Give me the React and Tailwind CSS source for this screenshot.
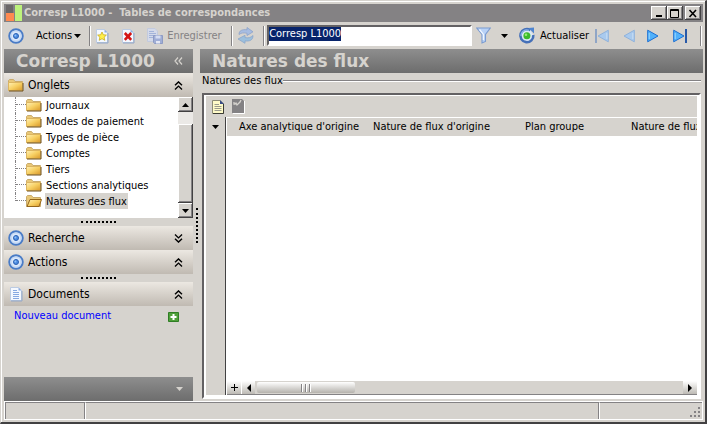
import { useState } from "react";

const tabs = [
  "Journaux",
  "Modes de paiement",
  "Types de pièce",
  "Comptes",
  "Tiers",
  "Sections analytiques",
  "Natures des flux",
];

const raised =
  "bg-[#d6d3ce] shadow-[inset_-1px_-1px_0_#424142,inset_1px_1px_0_#ffffff,inset_-2px_-2px_0_#848284]";
const darkBar = "bg-linear-to-b from-[#8e8e8e] to-[#6d6d6d] text-[#d6d3ce]";

/* ---------- Icons ---------- */

function TargetIcon() {
  return (
    <svg width="16" height="16" viewBox="0 0 16 16" className="shrink-0">
      <circle cx="8" cy="8" r="6.8" fill="#dce9fb" stroke="#4a7cc6" strokeWidth="1.9" />
      <circle cx="8" cy="8" r="5" fill="none" stroke="#c0d6f4" />
      <circle cx="8" cy="8" r="2.5" fill="#4a8ae0" stroke="#2c62b4" />
      <circle cx="7.4" cy="7.4" r="1" fill="#8fc0f8" />
    </svg>
  );
}

function FolderIcon({ open }) {
  return (
    <svg width="16" height="14" viewBox="0 0 16 14" className="shrink-0">
      <defs>
        <linearGradient id="folder" x1="0" y1="0" x2="1" y2="1">
          <stop offset="0" stopColor="#fff0b4" />
          <stop offset="0.5" stopColor="#f7cf62" />
          <stop offset="1" stopColor="#d9982a" />
        </linearGradient>
      </defs>
      <path d="M.5 12.5V2.5L1.5 1.5H5.5L7 3.5H14.5V12.5Z" fill="#e9c878" stroke="#c9ab6c" />
      {open ? (
        <path d="M1 12.5 4 5.5H15.5L13 12.5Z" fill="url(#folder)" stroke="#94661c" />
      ) : (
        <>
          <path d="M.5 4.5H14.5V12.5H.5Z" fill="url(#folder)" stroke="#dcb560" />
          <path d="M1 13H15V5" fill="none" stroke="#6e4f1a" />
        </>
      )}
    </svg>
  );
}

function PageIcon({ kind }) {
  return (
    <svg width="14" height="16" viewBox="0 0 14 16" className="shrink-0">
      <path d="M1.5 1.5H9.5L12.5 4.5V14.5H1.5Z" fill="#f4f8ff" stroke="#bccbe2" />
      <path d="M2 15H13V5" fill="none" stroke="#93a6c6" />
      <path d="M9.5 1.5V4.5H12.5Z" fill="#8faee0" />
      {kind === "star" && (
        <path
          d="M7 4 8.3 6.8 11.4 7.1 9.1 9.2 9.8 12.3 7 10.7 4.2 12.3 4.9 9.2 2.6 7.1 5.7 6.8Z"
          fill="#fff04a"
          stroke="#c9ac20"
          strokeWidth=".8"
        />
      )}
      {kind === "delete" && (
        <path d="M3.8 5 10.2 11.8M10.2 5 3.8 11.8" stroke="#d41414" strokeWidth="2.6" />
      )}
      {kind === "text" && (
        <path d="M4 4.5H8M4 6.5H10M4 8.5H10M4 10.5H10M4 12.5H10" stroke="#86a8e2" />
      )}
    </svg>
  );
}

function SaveIcon() {
  return (
    <svg width="16" height="16" viewBox="0 0 16 16" className="shrink-0">
      <path d="M.5.5H8L10.5 3V13.5H.5Z" fill="#d4daea" stroke="#c2cade" />
      <path d="M2 3.5H7M2 5.5H9M2 7.5H9M2 9.5H6" stroke="#a3b4da" />
      <path d="M6.5 7.5H15.5V15.5H7.5L6.5 14.5Z" fill="#a0aed6" stroke="#8d9bc4" />
      <path d="M8.5 7.5H13.5V10.5H8.5Z" fill="#d5ddf2" />
      <path d="M9 13H13V15.5H9Z" fill="#e4e8f4" />
    </svg>
  );
}

function SyncIcon() {
  return (
    <svg width="18" height="17" viewBox="0 0 18 17" className="shrink-0">
      <path
        d="M2 7.5C2 3.5 5 2.2 10 2.8V.5L16 4.8 10 8.5V6.2C6.5 5.6 4.5 5.7 2 7.5Z"
        fill="#a7bde2"
        stroke="#8ba2ca"
        strokeWidth=".8"
      />
      <path
        d="M16 8.5C16 13 13 14.5 8 13.9V16.3L1 12 8 8.3V10.6C11.5 11.2 13.5 10.8 16 8.5Z"
        fill="#9cc0de"
        stroke="#8aa6ca"
        strokeWidth=".8"
      />
    </svg>
  );
}

function FilterIcon() {
  return (
    <svg width="15" height="17" viewBox="0 0 15 17" className="shrink-0">
      <path
        d="M.7 1H14.3L9.5 7.5V14.5L6 16V7.5Z"
        fill="#b9d2f6"
        stroke="#7b9bd0"
        strokeWidth="1.1"
      />
      <path d="M3.5 2.5 7.4 7.4V13" fill="none" stroke="#f0f6ff" strokeWidth="1.3" />
    </svg>
  );
}

function RefreshIcon() {
  return (
    <svg width="18" height="17" viewBox="0 0 18 17" className="shrink-0">
      <path
        d="M12.3 3.2A6.5 6.5 0 1 0 15.3 8"
        fill="#dbe8f6"
        stroke="#4570b8"
        strokeWidth="2.6"
      />
      <path d="M11 3.4A5.8 5.8 0 0 0 3 9" fill="none" stroke="#8fb6ea" strokeWidth="1.2" />
      <path d="M10.5 1 16 .5V6.5Z" fill="#4f85d0" />
      <circle cx="8.9" cy="8.8" r="3.5" fill="#3cba2c" />
      <circle cx="8" cy="7.8" r="1.3" fill="#96ec74" />
    </svg>
  );
}

// direction: "prev" or "next"; `end` adds the stop bar
function NavIcon({ direction, end }) {
  const muted = direction === "prev";
  return (
    <svg width="16" height="14" viewBox="0 0 16 14" className={muted ? "-scale-x-100" : ""}>
      <path
        d="M1.7 1.2 12 7 1.7 12.8Z"
        fill={muted ? "#a9caee" : "#51b1fb"}
        stroke={muted ? "#8fb2dc" : "#1d6fd2"}
      />
      <path d="M3.2 4V10" stroke={muted ? "#c8def4" : "#9bd8ff"} />
      {end && <path d="M14 0V14" stroke={muted ? "#8fa5c6" : "#2859a8"} strokeWidth="2" />}
    </svg>
  );
}

function Chevrons({ down }) {
  return (
    <svg width="9" height="9" viewBox="0 0 9 9" className={down ? "rotate-180" : ""}>
      <path d="M1 4.2 4.5.9 8 4.2M1 8.4 4.5 5.1 8 8.4" fill="none" stroke="#000" strokeWidth="1.4" />
    </svg>
  );
}

function Caret({ dir = "down" }) {
  const points = {
    down: "0,0 7,0 3.5,4",
    up: "0,4 7,4 3.5,0",
    left: "5,0 5,8 1,4",
    right: "1,0 1,8 5,4",
  };
  const tall = dir === "left" || dir === "right";
  return (
    <svg width={tall ? 6 : 7} height={tall ? 8 : 4} className="shrink-0" fill="currentColor">
      <polygon points={points[dir]} />
    </svg>
  );
}

/* ---------- Parts ---------- */

function Divider() {
  return <span className="h-5 w-0.5 shrink-0 border-l border-[#848284] bg-white" />;
}

function WindowButton({ label, children }) {
  return (
    <button aria-label={label} className={`flex h-3.5 w-4 items-center justify-center ${raised}`}>
      <svg width="10" height="9" fill="none" stroke="#000">
        {children}
      </svg>
    </button>
  );
}

function TitleBar() {
  return (
    <header className="flex h-[18px] shrink-0 items-center bg-[#848284] pr-0.5 text-[#d6d3ce]">
      <svg width="18" height="16" className="shrink-0">
        <path d="M2 0H9V8H2Z" fill="#6b6768" />
        <path d="M2 8H10V16H2Z" fill="#ff8a50" />
        <path d="M11 0H18V16H11Z" fill="#bdf27c" />
      </svg>
      <h1 className="ml-0.5 flex-1 truncate font-['DejaVu_Sans_Condensed','DejaVu_Sans',sans-serif] text-[11px] font-bold whitespace-pre">
        Corresp L1000 -  Tables de correspondances
      </h1>
      <WindowButton label="Réduire">
        <path d="M2 7H8" strokeWidth="2" />
      </WindowButton>
      <WindowButton label="Agrandir">
        <path d="M.5.5H8.5V8.5H.5ZM.5 1.5H8.5" />
      </WindowButton>
      <span className="w-0.5" />
      <WindowButton label="Fermer">
        <path d="M1.5 1 8 8M8 1 1.5 8" strokeWidth="1.6" />
      </WindowButton>
    </header>
  );
}

function Toolbar() {
  const [name, setName] = useState("Corresp L1000");
  return (
    <div className="flex h-[27px] shrink-0 items-center pr-px pl-1">
      <button aria-label="Menu">
        <TargetIcon />
      </button>
      <button className="ml-3 flex items-center gap-0.5">
        Actions <Caret />
      </button>
      <span className="w-2" />
      <Divider />
      <button aria-label="Nouveau" className="ml-1">
        <PageIcon kind="star" />
      </button>
      <button aria-label="Supprimer" className="ml-3">
        <PageIcon kind="delete" />
      </button>
      <button disabled className="mr-3 ml-3 flex items-center gap-1 text-[#848284]">
        <SaveIcon />
        <span className="w-[52px] text-left">Enregistrer</span>
      </button>
      <Divider />
      <button aria-label="Synchroniser" className="mx-1">
        <SyncIcon />
      </button>
      <span className="w-1" />
      <Divider />
      <div className="ml-0.5 flex h-[21px] min-w-0 flex-1 items-start border-2 border-t-[#636163] border-r-white border-b-white border-l-[#636163] bg-white">
        <input
          aria-label="Nom"
          value={name}
          onChange={(e) => setName(e.target.value)}
          className="field-sizing-content h-3.5 max-w-full bg-[#08246b] text-white outline-none"
        />
      </div>
      <button aria-label="Filtrer" className="ml-1">
        <FilterIcon />
      </button>
      <button aria-label="Options du filtre" className="mx-2.5">
        <Caret />
      </button>
      <button className="flex w-[70px] items-center gap-1">
        <RefreshIcon /> Actualiser
      </button>
      <nav className="ml-1.5 flex gap-2.5">
        <button aria-label="Premier">
          <NavIcon direction="prev" end />
        </button>
        <button aria-label="Précédent">
          <NavIcon direction="prev" />
        </button>
        <button aria-label="Suivant">
          <NavIcon direction="next" />
        </button>
        <button aria-label="Dernier">
          <NavIcon direction="next" end />
        </button>
      </nav>
      <span className="w-3" />
      <Divider />
    </div>
  );
}

function SectionHeader({ icon, title, down }) {
  return (
    <button className="flex h-6 w-full shrink-0 items-center bg-linear-to-b from-[#ece8e2] to-[#c0bab2] pr-2.5 pl-1 text-left">
      <span className="flex w-4 justify-center">{icon}</span>
      <span className="ml-1 flex-1 text-[12px]">{title}</span>
      <Chevrons down={down} />
    </button>
  );
}

function Grip() {
  return (
    <div className="flex h-2 shrink-0 items-center justify-center">
      <span className="w-[35px] border-t-2 border-dotted border-black" />
    </div>
  );
}

function TabTree() {
  const [selected, setSelected] = useState("Natures des flux");
  return (
    <div className="flex h-[121px] shrink-0 bg-white">
      <ul className="flex-1">
        {tabs.map((tab, i) => (
          <li key={tab} className="flex h-4 items-center pl-[11px]">
            <span
              className={`w-[11px] shrink-0 self-start border-l border-dotted border-[#848284] ${
                i === tabs.length - 1 ? "h-2" : "h-4"
              }`}
            >
              <span className="block h-2 border-b border-dotted border-[#848284]" />
            </span>
            <FolderIcon open={tab === selected} />
            <button
              onClick={() => setSelected(tab)}
              className={`ml-[3px] h-4 px-px leading-[18px] ${tab === selected ? "bg-[#d6d3ce]" : ""}`}
            >
              {tab}
            </button>
          </li>
        ))}
      </ul>
      <div className="flex w-[15px] flex-col">
        <button aria-label="Monter" className={`flex h-[15px] items-center justify-center ${raised}`}>
          <Caret dir="up" />
        </button>
        <span className="h-3 bg-[#ebe9e6]" />
        <span className={`flex-1 ${raised}`} />
        <button aria-label="Descendre" className={`flex h-[15px] items-center justify-center ${raised}`}>
          <Caret />
        </button>
      </div>
    </div>
  );
}

function Sidebar() {
  return (
    <aside className="flex w-[189px] shrink-0 flex-col">
      <div className={`flex h-6 shrink-0 items-center pr-2.5 pl-3 ${darkBar}`}>
        <h2 className="flex-1 font-['DejaVu_Sans',sans-serif] text-[17px] leading-6 font-bold">Corresp L1000</h2>
        <button aria-label="Replier le volet">
          <svg width="9" height="8" fill="none" stroke="#d6d3ce" strokeWidth="1.2">
            <path d="M4 .5 1 4 4 7.5M8 .5 5 4 8 7.5" />
          </svg>
        </button>
      </div>
      <SectionHeader icon={<FolderIcon />} title="Onglets" />
      <TabTree />
      <Grip />
      <SectionHeader icon={<TargetIcon />} title="Recherche" down />
      <SectionHeader icon={<TargetIcon />} title="Actions" />
      <Grip />
      <SectionHeader icon={<PageIcon kind="text" />} title="Documents" />
      <div className="flex flex-1 items-start justify-between pt-0.5 pr-3.5 pl-2.5">
        <a href="#nouveau" className="text-[#0000ff]">
          Nouveau document
        </a>
        <button aria-label="Ajouter" className="pt-1">
          <svg width="11" height="10">
            <path d="M.5.5H10.5V9.5H.5Z" fill="#4fa03a" stroke="#2f7d24" />
            <path d="M5.5 2V8M2.5 5H8.5" stroke="#fff" strokeWidth="2" />
          </svg>
        </button>
      </div>
      <div className={`flex h-6 shrink-0 items-center justify-end pr-2.5 ${darkBar}`}>
        <Caret />
      </div>
    </aside>
  );
}

function Grid() {
  return (
    <div className="flex min-h-0 flex-1 border-2 border-t-[#636163] border-r-white border-b-white border-l-[#636163]">
      <div className="flex min-w-0 flex-1 flex-col border-2 border-t border-white">
        <div className="flex h-[21px] shrink-0 items-center gap-2 pl-1.5">
          <button aria-label="Nouvelle ligne">
            <svg width="12" height="14">
              <path d="M.5.5H8L11.5 4V13.5H.5Z" fill="#fffbc8" stroke="#8d8c76" />
              <path d="M8 0V4H12Z" fill="#394c84" />
              <path d="M2.5 4.5H7M2.5 6.5H9.5M2.5 8.5H9.5M2.5 10.5H9.5" stroke="#9a9a8c" />
              <path d="M11.5 4V13.5H1" fill="none" stroke="#3c3c34" />
            </svg>
          </button>
          <button aria-label="Exporter" disabled>
            <svg width="13" height="15">
              <path d="M0 0H10L12 2V14H0Z" fill="#848284" />
              <path d="M12.5 2V14.5H1" fill="none" stroke="#fff" />
              <path d="M2 3V5H3L4 4 5 6 7 4 8 3 9 1" fill="none" stroke="#d6d3ce" strokeWidth="1.3" />
            </svg>
          </button>
        </div>
        <div className="flex min-h-0 flex-1">
          <div className="flex w-5 shrink-0 justify-center border-r border-[#424142] pt-2">
            <Caret />
          </div>
          <div className="flex min-w-0 flex-1 flex-col border-l border-white bg-white">
            <div className="min-h-0 flex-1 overflow-hidden">
              <table className="w-full min-w-[560px] table-fixed border-t border-white bg-[#d6d3ce] text-left leading-[18px]">
                <thead>
                  <tr className="h-[18px] whitespace-nowrap">
                    <th className="w-[134px] pl-3 font-normal">Axe analytique d'origine</th>
                    <th className="w-[152px] pl-3 font-normal">Nature de flux d'origine</th>
                    <th className="w-[106px] pl-3 font-normal">Plan groupe</th>
                    <th className="pl-3 font-normal">Nature de flux</th>
                  </tr>
                </thead>
              </table>
            </div>
            <div className="flex h-3.5 shrink-0 items-center border-b border-[#848284] bg-[#d6d3ce]">
              <button
                aria-label="Ajouter une ligne"
                className="flex h-full w-3.5 items-center justify-center bg-linear-to-b from-white to-[#bdbab4]"
              >
                <svg width="7" height="7" stroke="#000">
                  <path d="M3.5 0V7M0 3.5H7" />
                </svg>
              </button>
              <button
                aria-label="Défiler à gauche"
                className="flex h-full w-3.5 items-center justify-center border-l border-white bg-linear-to-b from-white to-[#bdbab4]"
              >
                <Caret dir="left" />
              </button>
              <span className="ml-0.5 flex h-[11px] w-[98px] items-center justify-center gap-0.5 rounded-xs bg-linear-to-b from-white to-[#b5b2ac]">
                <span className="h-2 w-0.5 border-l border-[#848284] bg-white" />
                <span className="h-2 w-0.5 border-l border-[#848284] bg-white" />
                <span className="h-2 w-0.5 border-l border-[#848284] bg-white" />
              </span>
              <span className="flex-1" />
              <button
                aria-label="Défiler à droite"
                className="flex h-full w-3.5 items-center justify-center bg-linear-to-b from-white to-[#bdbab4]"
              >
                <Caret dir="right" />
              </button>
            </div>
          </div>
        </div>
      </div>
    </div>
  );
}

export default function App() {
  return (
    <div className="flex h-screen flex-col border border-r-2 border-b-2 border-[#d6d3ce] border-r-[#424142] border-b-[#424142] bg-[#d6d3ce] font-['DejaVu_Sans_Condensed','Noto_Sans',sans-serif] text-[11px] leading-4 text-black">
      <div className="flex min-h-0 flex-1 flex-col border-t border-l border-white p-0.5">
        <TitleBar />
        <Toolbar />
        <div className="flex min-h-0 flex-1">
          <Sidebar />
          <div className="flex w-[7px] shrink-0 justify-center pt-[159px]">
            <span className="h-[35px] border-l-2 border-dotted border-black" />
          </div>
          <main className="flex min-w-0 flex-1 flex-col">
            <div className={`flex h-6 shrink-0 items-center pl-3 ${darkBar}`}>
              <h2 className="font-['DejaVu_Sans',sans-serif] text-[17px] leading-6 font-bold">Natures des flux</h2>
            </div>
            <section className="flex min-h-0 flex-1 flex-col px-0.5 pb-0.5">
              <div className="mb-1 flex h-4 shrink-0 items-center">
                <h3>Natures des flux</h3>
                <span className="h-0.5 flex-1 border-t border-[#848284] bg-white" />
              </div>
              <Grid />
            </section>
          </main>
        </div>
        <footer className="flex h-[19px] shrink-0 border border-white">
          <span className="w-20 border-t border-r border-l border-[#848284]" />
          <span className="flex-1 border-t border-r border-l border-[#848284] border-l-white" />
          <span className="flex w-[103px] items-end justify-end border-t border-l border-[#848284] border-l-white">
            <svg width="12" height="12" fill="#848284">
              <path d="M8 0h2v2H8zM8 4h2v2H8zM4 4h2v2H4zM8 8h2v2H8zM4 8h2v2H4zM0 8h2v2H0z" />
            </svg>
          </span>
        </footer>
      </div>
    </div>
  );
}
